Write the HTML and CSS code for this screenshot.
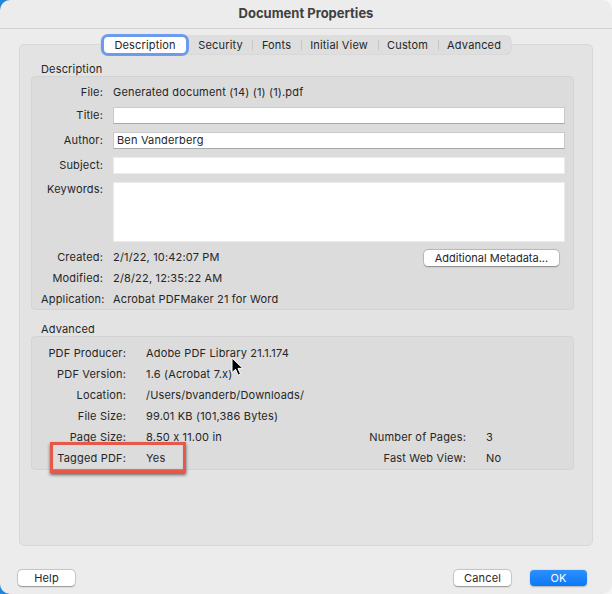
FILE: index.html
```html
<!DOCTYPE html>
<html lang="en">
<head>
    <meta charset="UTF-8">
    <meta name="viewport" content="width=device-width, initial-scale=1.0">
    <title>Document Properties</title>
    <link rel="stylesheet" href="styles.css">
</head>
<body>
    <div class="window">
        <div class="titlebar">Document Properties</div>

        <div class="content">
            <div class="tabs">
                <span class="tab selected">Description</span>
                <span class="tab">Security</span>
                <span class="tab sep">Fonts</span>
                <span class="tab sep">Initial View</span>
                <span class="tab sep">Custom</span>
                <span class="tab sep">Advanced</span>
            </div>

            <div class="panel">
                <div class="group-title">Description</div>
                <div class="group">
                    <div class="fields">
                        <label class="first">File:</label>
                        <span class="first">Generated document (14) (1) (1).pdf</span>

                        <label for="title">Title:</label>
                        <input type="text" id="title" class="field framed">

                        <label for="author">Author:</label>
                        <input type="text" id="author" class="field framed" value="Ben Vanderberg">

                        <label for="subject">Subject:</label>
                        <input type="text" id="subject" class="field">

                        <label for="keywords" class="top">Keywords:</label>
                        <textarea id="keywords" class="field keywords"></textarea>
                    </div>

                    <div class="meta">
                        <label>Created:</label>
                        <span>2/1/22, 10:42:07 PM</span>
                        <button class="btn metadata">Additional Metadata...</button>

                        <label>Modified:</label>
                        <span>2/8/22, 12:35:22 AM</span>
                        <span></span>

                        <label>Application:</label>
                        <span>Acrobat PDFMaker 21 for Word</span>
                        <span></span>
                    </div>
                </div>

                <div class="group-title second">Advanced</div>
                <div class="group advanced">
                    <div class="info">
                        <label>PDF Producer:</label>
                        <span>Adobe PDF Library 21.1.174</span>
                        <span></span><span></span>

                        <label>PDF Version:</label>
                        <span>1.6 (Acrobat 7.x)</span>
                        <span></span><span></span>

                        <label>Location:</label>
                        <span>/Users/bvanderb/Downloads/</span>
                        <span></span><span></span>

                        <label>File Size:</label>
                        <span>99.01 KB (101,386 Bytes)</span>
                        <span></span><span></span>

                        <label>Page Size:</label>
                        <span>8.50 x 11.00 in</span>
                        <label>Number of Pages:</label>
                        <span>3</span>

                        <label>Tagged PDF:</label>
                        <span>Yes</span>
                        <label>Fast Web View:</label>
                        <span>No</span>
                    </div>
                    <span class="highlight"></span>
                </div>
            </div>
        </div>

        <div class="footer">
            <button class="btn">Help</button>
            <button class="btn cancel">Cancel</button>
            <button class="btn ok">OK</button>
        </div>

        <svg class="cursor" width="13" height="20" viewBox="0 0 13 20">
            <path d="M1 1 L1 15.6 L4.6 12.3 L7.1 18.2 L9.5 17.1 L7 11.4 L11.8 11.4 Z" fill="#000" stroke="#fff" stroke-width="1" stroke-linejoin="round"/>
        </svg>
    </div>
</body>
</html>
```

FILE: styles.css
```css
html {
    background: linear-gradient(90deg, #1f86d8 0, #1f86d8 50%, #f6f6f6 50%);
}
body {
    margin: 0;
    font-family: Inter, "Liberation Sans", Arial, sans-serif;
    font-size: 11px;
    letter-spacing: 0.17px;
    font-feature-settings: "calt" 0;
    color: #262626;
}
.window {
    position: relative;
    height: 594px;
    display: flex;
    flex-direction: column;
    background: #ececec;
    border-radius: 10px;
    overflow: hidden;
}
.titlebar {
    height: 28px;
    line-height: 27px;
    text-align: center;
    font-size: 13px;
    font-weight: 700;
    letter-spacing: 0;
    color: #404040;
    border-bottom: 1px solid #d2d2d2;
}
.content {
    flex: 1;
    display: flex;
    flex-direction: column;
    padding: 7px 19px 0 19px;
}
.tabs {
    align-self: center;
    display: flex;
    height: 16px;
    padding: 1px 0;
    margin-bottom: -10px;
    background: #dedede;
    border-radius: 5px;
    box-shadow: 0 0 0 0.5px #cfcfcf;
    position: relative;
    z-index: 1;
}
.tab {
    line-height: 16px;
    padding: 0 9.5px;
    white-space: nowrap;
}
.tab.sep {
    background: linear-gradient(#c6c6c6, #c6c6c6) left center / 1px 10px no-repeat;
}
.tab.selected {
    margin: 0 3px;
    padding: 0 10px;
    background: #fff;
    border-radius: 4px;
    box-shadow: 0 0 0 3px rgba(88, 142, 238, 0.85);
}
.panel {
    flex: 1;
    background: #e3e3e3;
    border: 1px solid #d8d8d8;
    border-radius: 5px;
    padding: 17px 18px 0 11px;
}
.group-title {
    line-height: 14px;
    padding-left: 10px;
}
.group-title.second {
    margin-top: 12px;
}
.group {
    position: relative;
    background: #dcdcdc;
    border: 1px solid #d3d3d3;
    border-radius: 4px;
    padding: 5px 8px 1px 9px;
}
.fields {
    display: grid;
    grid-template-columns: 62px 1fr;
    column-gap: 10px;
    row-gap: 8px;
    line-height: 17px;
}
.fields .first {
    padding-top: 2px;
    margin-bottom: -2px;
}
.fields label, .meta label, .info label {
    text-align: right;
}
.fields label.top {
    line-height: 14px;
}
.field {
    box-sizing: border-box;
    width: 100%;
    height: 17px;
    margin: 0;
    padding: 0 3px;
    font: inherit;
    letter-spacing: inherit;
    color: #262626;
    background: #fff;
    border: 1px solid #ebebeb;
    border-radius: 0;
    outline: none;
}
.field.framed {
    border-color: #cacaca #cacaca #a8a8a8 #cacaca;
}
.keywords {
    height: 60px;
    resize: none;
}
.meta {
    display: grid;
    grid-template-columns: 62px 1fr auto;
    column-gap: 10px;
    row-gap: 4px;
    line-height: 17px;
    margin-top: 7px;
}
.btn {
    height: 16px;
    width: 57px;
    padding: 0;
    font: inherit;
    letter-spacing: inherit;
    color: #262626;
    background: #fff;
    border: none;
    border-radius: 4px;
    box-shadow: 0 0 0 0.5px rgba(0, 0, 0, 0.22), 0 0.5px 1.5px rgba(0, 0, 0, 0.3);
}
.btn.metadata {
    width: 135px;
    align-self: end;
    margin-right: 6px;
    letter-spacing: 0;
}
.advanced {
    padding: 6px 8px 0 9px;
}
.info {
    display: grid;
    grid-template-columns: 85px 1fr 110px 79px;
    column-gap: 20px;
    line-height: 21px;
}
.highlight {
    position: absolute;
    left: 18px;
    top: 105px;
    width: 136px;
    height: 31px;
    box-sizing: border-box;
    border: 3px solid #e8584a;
    box-shadow: 0 2px 3px rgba(0, 0, 0, 0.55), inset 0 -1px 1px rgba(0, 0, 0, 0.35);
}
.footer {
    display: flex;
    padding: 24px 25px 8px 18px;
}
.cancel {
    margin-left: auto;
}
.btn.ok {
    margin-left: 19px;
    color: #fff;
    background: linear-gradient(#2d90fd, #0b79f6);
    box-shadow: 0 0.5px 1.5px rgba(0, 0, 0, 0.25);
}
.cursor {
    position: absolute;
    left: 231px;
    top: 357px;
}
```
